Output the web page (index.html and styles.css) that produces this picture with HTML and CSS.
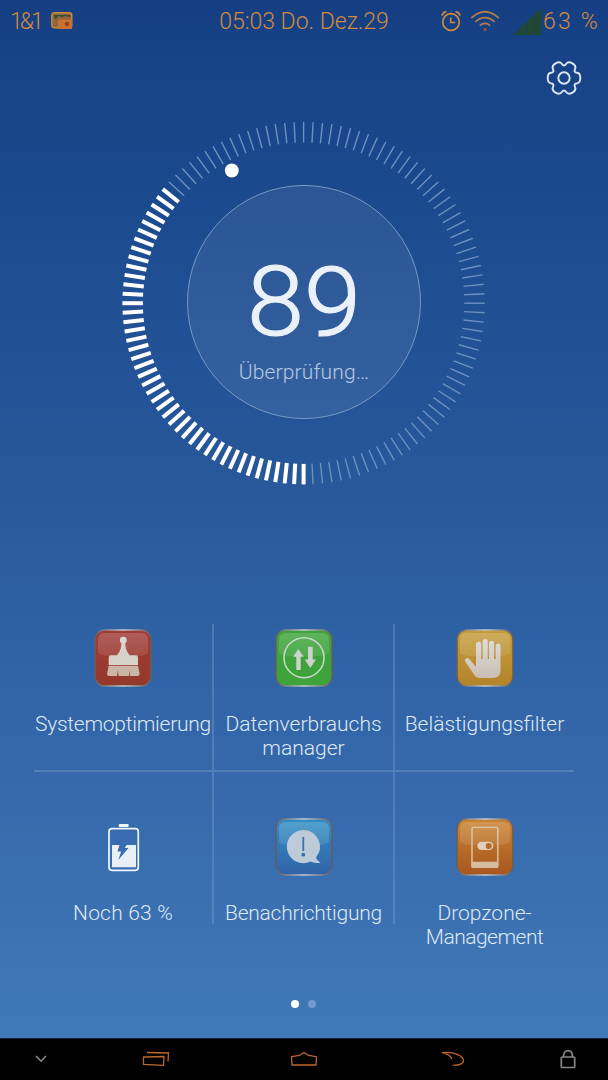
FILE: index.html
```html
<!DOCTYPE html>
<html lang="de">
<head>
  <meta charset="UTF-8" />
  <meta name="viewport" content="width=device-width, initial-scale=1" />
  <title>Telefonmanager</title>
  <link rel="stylesheet" href="styles.css">
</head>
<body>
  <div class="statusbar">
    <div class="status-left">
      <span class="carrier">1&amp;1</span>
      <svg width="22" height="18" viewBox="0 0 22 18">
        <rect x="0.8" y="0.8" width="20" height="15" rx="2.5" fill="#8f6440" stroke="#d08a3c" stroke-width="1.4"/>
        <path d="M3 3h16v2l-5-1-3 1-4-1-2 3-2-1z" fill="#31532f"/>
        <rect x="7" y="7.5" width="14" height="9.5" rx="1.5" fill="#c9722e"/>
        <circle cx="16" cy="12" r="2.2" fill="#963e28"/>
      </svg>
    </div>
    <div class="clock">05:03 Do. Dez.29</div>
    <div class="status-right">
      <svg class="alarm" width="20" height="22" viewBox="0 0 20 22" fill="none" stroke="#d18a3c" stroke-width="1.7">
        <circle cx="10" cy="12" r="8.3"/>
        <path d="M9.7 7.5v5h4.5"/>
        <path d="M0.8 5.5Q2 2.3 5.5 1.5M19.2 5.5Q18 2.3 14.5 1.5"/>
      </svg>
      <svg class="wifi" width="30" height="22" viewBox="0 0 30 22" fill="none" stroke="#b67c43" stroke-width="1.7">
        <path d="M1.3 8Q15-4.5 28.7 8"/>
        <path d="M5.3 11.8Q15 3.6 24.7 11.8"/>
        <path d="M9.8 15.7Q15 11.2 20.2 15.7"/>
        <circle cx="15" cy="19.5" r="1.5" fill="#b34d2b" stroke="none"/>
      </svg>
      <svg class="signal" width="28" height="27" viewBox="0 0 28 27">
        <path d="M0 27L28 0V27Z" fill="#21492f"/>
        <path d="M7 20v7M14 14v13M21 7v20" stroke="#183f68" stroke-width="1"/>
      </svg>
      <span class="percent">63 %</span>
    </div>
  </div>

  <div class="header">
    <svg width="36" height="36" viewBox="-18 -18 36 36" fill="none" stroke="#dce6f2" stroke-width="1.9">
      <path d="M16.3 0Q16.3 4.8 13.2 5.2Q9.5 5.5 11 8.9Q12.6 12.2 8.4 14.6Q4.2 17 2.1 14Q0 11-2.1 14Q-4.2 17-8.4 14.6Q-12.6 12.2-11 8.9Q-9.5 5.5-13.2 5.2Q-16.3 4.8-16.3 0Q-16.3-4.8-13.2-5.2Q-9.5-5.5-11-8.9Q-12.6-12.2-8.4-14.6Q-4.2-17-2.1-14Q0-11 2.1-14Q4.2-17 8.4-14.6Q12.6-12.2 11-8.9Q9.5-5.5 13.2-5.2Q16.3-4.8 16.3 0Z"/>
      <circle r="5.7"/>
    </svg>
  </div>

  <div class="dial">
    <svg class="ring" width="366" height="366" viewBox="-183 -183 366 366">
      <g id="ticks"></g>
      <circle class="disc" cx="0" cy="-1" r="116.5"/>
      <circle cx="-72.2" cy="-132.5" r="6.9" fill="#fff"/>
    </svg>
    <div class="score">
      <div class="number">89</div>
      <div class="state">Überprüfung…</div>
    </div>
  </div>

  <div class="grid">
    <div class="cell">
      <svg class="icon" viewBox="0 0 58 58">
        <defs>
          <linearGradient id="rim" x1="0" x2="1" y1="0" y2="0">
            <stop offset="0" stop-color="#625d61"/>
            <stop offset="0.5" stop-color="#c4cbd3"/>
            <stop offset="1" stop-color="#625d61"/>
          </linearGradient>
          <linearGradient id="shine" x1="0" x2="0" y1="0" y2="1">
            <stop offset="0" stop-color="#fff" stop-opacity="0.17"/>
            <stop offset="1" stop-color="#fff" stop-opacity="0.1"/>
          </linearGradient>
          <linearGradient id="paper" x1="0" x2="0" y1="0" y2="1">
            <stop offset="0" stop-color="#dcdcde"/>
            <stop offset="1" stop-color="#cbbfb2"/>
          </linearGradient>
          <linearGradient id="red" x1="0" x2="0" y1="0" y2="1">
            <stop offset="0" stop-color="#a23c38"/>
            <stop offset="1" stop-color="#93392a"/>
          </linearGradient>
          <linearGradient id="yellow" x1="0" x2="0" y1="0" y2="1">
            <stop offset="0" stop-color="#c49e3c"/>
            <stop offset="1" stop-color="#b4832a"/>
          </linearGradient>
          <linearGradient id="blue" x1="0" x2="0" y1="0" y2="1">
            <stop offset="0" stop-color="#2f8fc4"/>
            <stop offset="1" stop-color="#3363a9"/>
          </linearGradient>
          <linearGradient id="orange" x1="0" x2="0" y1="0" y2="1">
            <stop offset="0" stop-color="#c98431"/>
            <stop offset="1" stop-color="#a9561f"/>
          </linearGradient>
          <path id="gloss" d="M4 24V11Q4 4 11 4H47Q54 4 54 11V24Q50 27 43 27H15Q8 27 4 24Z" fill="url(#shine)"/>
        </defs>
        <rect class="tile" x="1" y="1" width="56" height="56" rx="9.5" fill="url(#red)"/>
        <use href="#gloss"/>
        <circle cx="29.3" cy="11.2" r="3.4" fill="#dcd8d6"/>
        <path d="M27.3 13H31.3Q31 21 35.5 26.2H42Q44 26.2 44 28.5V36H14.7V28.5Q14.7 26.2 16.7 26.2H23Q27.7 21 27.3 13Z" fill="#d8d2cb"/>
        <path d="M14.7 36.7H44L45.7 45Q45.7 47 43.5 47H36V41L35 47H24.5L24 41L23 47H15Q13 47 13 45Z" fill="#cbb5a4"/>
      </svg>
      <div class="label tight">Systemoptimierung</div>
    </div>
    <div class="cell">
      <svg class="icon" viewBox="0 0 58 58">
        <rect class="tile" x="1" y="1" width="56" height="56" rx="9.5" fill="#3da33a"/>
        <use href="#gloss"/>
        <circle cx="29" cy="28.7" r="20" fill="none" stroke="#ccd8c9" stroke-width="1.5"/>
        <path d="M23.3 20L28.7 27.7H25.7V41H21.3V27.7H18Z" fill="#ced2ce"/>
        <path d="M33 17.7H37.7V30.5H41L35.3 39L29.7 30.5H33Z" fill="#ced2ce"/>
      </svg>
      <div class="label">Datenverbrauchs<br>manager</div>
    </div>
    <div class="cell">
      <svg class="icon" viewBox="0 0 58 58">
        <rect class="tile" x="1" y="1" width="56" height="56" rx="9.5" fill="url(#yellow)"/>
        <use href="#gloss"/>
        <path d="M20 38V15.3a2.6 2.6 0 0 1 5.2 0V30H26.7V12.6a2.5 2.5 0 0 1 5 0V30H33V14.2a2.5 2.5 0 0 1 5 0V30H39.7V17a2.4 2.4 0 0 1 4.8 0V41Q44.5 49 36.5 49H24.5Q20 49 18 45.5L9.5 33Q8.3 30 10.8 29Q12.5 28.7 13.8 30.5Z" fill="url(#paper)"/>
      </svg>
      <div class="label">Belästigungsfilter</div>
    </div>
    <div class="cell">
      <svg class="icon" viewBox="0 0 58 58">
        <rect x="24.7" y="6" width="10" height="3" rx="1.2" fill="#f2f6fb"/>
        <rect x="15" y="10.7" width="29.3" height="41.6" rx="3" fill="none" stroke="#f2f6fb" stroke-width="1.7"/>
        <path d="M18 27H25.5L23.5 33.5H27.2L24.3 42L34.5 30H30.8L32.5 27H42V49.3H18Z" fill="#e9eff7"/>
      </svg>
      <div class="label wide">Noch 63 %</div>
    </div>
    <div class="cell">
      <svg class="icon" viewBox="0 0 58 58">
        <rect class="tile" x="1" y="1" width="56" height="56" rx="9.5" fill="url(#blue)"/>
        <use href="#gloss"/>
        <path d="M28.3 12a16.6 16.6 0 0 1 12.7 27.3Q42 43 45.7 44.5Q40 46 35.5 43.6A16.6 16.6 0 1 1 28.3 12Z" fill="#bdcad8"/>
        <path d="M28.3 19V33" stroke="#3a6fae" stroke-width="1.8"/>
        <circle cx="28.3" cy="36.7" r="1.9" fill="#3a6fae"/>
      </svg>
      <div class="label tight">Benachrichtigung</div>
    </div>
    <div class="cell">
      <svg class="icon" viewBox="0 0 58 58">
        <rect class="tile" x="1" y="1" width="56" height="56" rx="9.5" fill="url(#orange)"/>
        <use href="#gloss"/>
        <rect x="16" y="9.4" width="25.8" height="40" rx="1.5" fill="none" stroke="#dcc8ac" stroke-width="1.4"/>
        <rect x="15.5" y="43.7" width="26.8" height="6.3" rx="1.5" fill="#d5bda2"/>
        <rect x="21.3" y="23.7" width="16" height="8.4" rx="4.2" fill="#dfd0bb"/>
        <circle cx="32.7" cy="27.9" r="3" fill="#b66b26"/>
      </svg>
      <div class="label">Dropzone-<br><span class="tighter">Management</span></div>
    </div>
  </div>

  <div class="pager">
    <span class="page active"></span>
    <span class="page"></span>
  </div>

  <div class="navbar">
    <svg width="12" height="8" viewBox="0 0 12 8" fill="none" stroke="#8c8c8c" stroke-width="1.6"><path d="M1 1L6 6.2L11 1"/></svg>
    <svg width="28" height="16" viewBox="0 0 28 16" fill="none" stroke="#bd672c" stroke-width="1.3"><path d="M1.5 6L22 5.5L21.5 14.3L1.5 13.5ZM5 1.5L26.5 2L26 10.5"/></svg>
    <svg width="28" height="16" viewBox="0 0 28 16" fill="none" stroke="#bd672c" stroke-width="1.3"><path d="M1.5 5.7L9.5 4.5L14 1.5L18.5 4.5L26.5 5.7L26 14L2 14Z"/></svg>
    <svg width="24" height="16" viewBox="0 0 24 16" fill="none" stroke="#bd672c" stroke-width="1.3"><path d="M11 8Q9 3.5 1 1.7C13 .3 22.5 5 22.5 10Q21.5 14.5 12 14.3"/></svg>
    <svg width="16" height="20" viewBox="0 0 16 20" fill="none" stroke="#858781" stroke-width="1.7"><rect x="1.3" y="8" width="13.4" height="10.5" rx="0.8"/><path d="M3.5 8Q3.5 1.7 8 1.7T12.5 8"/></svg>
  </div>

  <script>
    const ticks = document.getElementById('ticks');
    const total = 120;
    const filled = 44;

    // starts at the bottom and runs clockwise
    for (let i = 0; i < total; i++) {
      const line = document.createElementNS('http://www.w3.org/2000/svg', 'line');
      line.setAttribute('y1', 160.7);
      line.setAttribute('y2', 181.2);
      line.setAttribute('class', i < filled ? 'tick on' : 'tick');
      line.setAttribute('transform', `translate(-0.4 0.2) rotate(${i * 360 / total})`);
      ticks.appendChild(line);
    }
  </script>
</body>
</html>
```
FILE: styles.css
```css
* {
  box-sizing: border-box;
}
body {
  margin: 0;
  height: 1080px;
  display: flex;
  flex-direction: column;
  overflow: hidden;
  font-family: Roboto, "Open Sans", sans-serif;
  font-weight: 300;
  color: #dfe8f3;
  background: linear-gradient(#163f83 0, #1a478b 150px, #204f93 300px, #28599b 500px, #2e62a4 640px, #376bad 820px, #4079b8 1038px);
}
svg {
  display: block;
}
.statusbar {
  height: 41px;
  padding: 0 10px 0 10px;
  display: grid;
  grid-template-columns: 1fr auto 1fr;
  align-items: center;
  font-size: 23px;
  line-height: 41px;
  color: #d18a3c;
  white-space: nowrap;
}
.status-left, .status-right {
  display: flex;
  align-items: center;
}
.status-left {
  gap: 10px;
}
.carrier {
  letter-spacing: -3px;
}
.carrier, .clock, .percent {
  padding-top: 1px;
}
.status-right {
  justify-content: flex-end;
}
.wifi {
  margin-left: 9px;
}
.signal {
  margin: 0 2px 0 13px;
}
.percent {
  letter-spacing: 2.2px;
  margin-right: -2px;
}
.header {
  height: 79px;
  padding: 19px 26px 0 0;
  display: flex;
  justify-content: flex-end;
}
.dial {
  display: grid;
  justify-content: center;
  height: 366px;
}
.ring, .score {
  grid-area: 1 / 1;
}
.tick {
  stroke: #6d90bf;
  stroke-width: 1.4;
}
.tick.on {
  stroke: #fff;
  stroke-width: 4;
}
.disc {
  fill: rgba(255, 255, 255, 0.07);
  stroke: #7899c4;
  stroke-width: 1;
}
.score {
  text-align: center;
  padding-top: 127px;
}
.number {
  font-size: 97px;
  line-height: 111px;
  color: #ebf1f8;
  transform: scaleX(1.06);
  -webkit-text-stroke: 1.2px #ebf1f8;
}
.state {
  font-size: 21px;
  line-height: 28px;
  letter-spacing: 0.15px;
  color: #b6c9e2;
}
.grid {
  margin: 138px 34px 0;
  height: 300px;
  display: grid;
  grid-template-columns: 180px 181px 179px;
  grid-template-rows: 148px 152px;
}
.cell {
  display: flex;
  flex-direction: column;
  align-items: center;
  padding-top: 5px;
  border-right: 2px solid rgba(115, 152, 195, 0.45);
}
.cell:nth-child(3n) {
  border-right: none;
}
.cell:nth-child(-n+3) {
  border-bottom: 2px solid rgba(115, 152, 195, 0.45);
}
.cell:nth-child(n+4) {
  padding-top: 46px;
}
.icon {
  width: 58px;
  height: 58px;
  flex: none;
}
.tile {
  stroke: url(#rim);
  stroke-width: 1.6;
}
.label {
  margin-top: 26px;
  font-size: 21px;
  line-height: 23.5px;
  text-align: center;
  white-space: nowrap;
}
.tight {
  letter-spacing: -0.25px;
}
.tighter {
  letter-spacing: -0.5px;
}
.wide {
  letter-spacing: 0.2px;
}
.pager {
  margin-top: 76px;
  padding-right: 1px;
  display: flex;
  justify-content: center;
  gap: 9px;
}
.page {
  width: 8px;
  height: 8px;
  border-radius: 50%;
  background: #6e9bcb;
}
.page.active {
  background: #fff;
}
.navbar {
  margin-top: auto;
  height: 42px;
  padding-bottom: 1px;
  display: grid;
  grid-template-columns: 81px 149px 148px 149px 81px;
  justify-items: center;
  align-items: center;
  background: #000;
  border-top: 1px solid #17263d;
}
```
